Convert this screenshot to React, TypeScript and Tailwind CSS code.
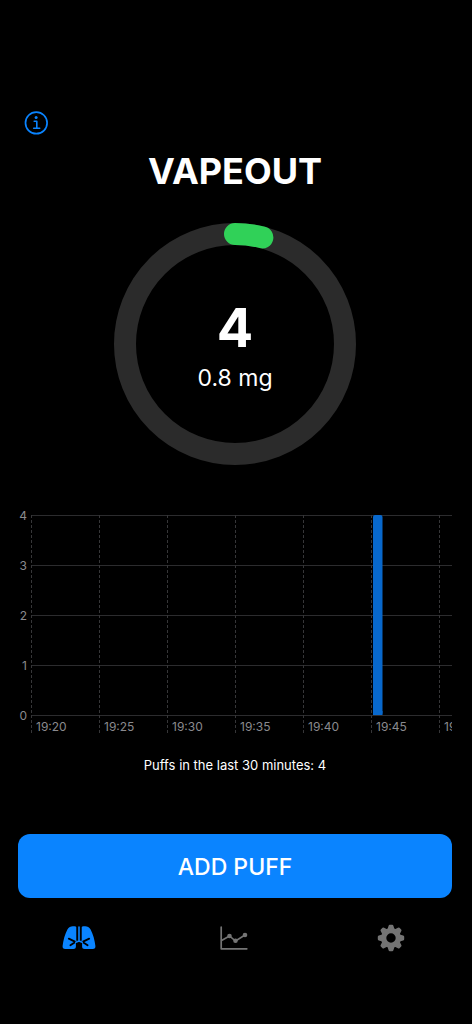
import { useState } from "react";

const GOAL = 100;
const MG_PER_PUFF = 0.2;

const RING_RADIUS = 110;
const RING_LENGTH = 2 * Math.PI * RING_RADIUS;

const PLOT_LEFT = 13;
const PLOT_TOP = 10;
const ROW_HEIGHT = 50;
const COL_WIDTH = 68;

const levels = [4, 3, 2, 1, 0];
const times = ["19:20", "19:25", "19:30", "19:35", "19:40", "19:45", "19:50"];

function InfoIcon() {
  return (
    <svg viewBox="0 0 24 24" className="size-6" fill="none" stroke="currentColor">
      <circle cx="12.3" cy="11.9" r="10.8" strokeWidth="1.7" />
      <circle cx="12.1" cy="6.5" r="1.5" fill="currentColor" stroke="none" />
      <path d="M10.2 10.2h2.6v6.8M9.700 17.200h6" strokeWidth="1.6" strokeLinecap="round" strokeLinejoin="round" />
    </svg>
  );
}

function LungsIcon() {
  return (
    <svg viewBox="0 0 34 24" className="h-6 w-[34px]" fill="none">
      <path
        d="M14.6 1.6v13.2l-.7 1v4.7c0 1.700-.9 2.500-2.500 2.500H3.300C1.300 23 .4 21.900.6 20.100 1.200 14.600 3 8 5.400 3.600 6.800 1.200 8.600.3 10.900.3c2.500 0 3.700.3 3.700 1.300z"
        fill="currentColor"
      />
      <path
        d="M19.400 1.600v13.200l.7 1v4.700c0 1.700.9 2.500 2.500 2.500h8.100c2 0 2.900-1.100 2.700-2.900C32.800 14.600 31 8 28.600 3.600 27.200 1.200 25.400.3 23.100.3c-2.500 0-3.700.3-3.700 1.300z"
        fill="currentColor"
      />
      <path
        d="M6.800 12.600 13.400 15.900 8.400 19.200M27.200 12.600 20.600 15.900 25.600 19.200"
        stroke="#000"
        strokeWidth="1.800"
        strokeLinecap="round"
        strokeLinejoin="round"
      />
      <path d="M15.200 0v14.200M18.800 0v14.200" stroke="#000" strokeWidth="1.500" />
      <path
        d="M17 1v13.800M13.800 16.200 17 14.900l3.200 1.300"
        stroke="currentColor"
        strokeWidth="1.600"
        strokeLinecap="round"
        strokeLinejoin="round"
      />
    </svg>
  );
}

function StatsIcon() {
  return (
    <svg viewBox="0 0 28 24" className="h-6 w-7" fill="none" stroke="currentColor" strokeLinecap="round">
      <path d="M1.200 1.200v21.600h25.600" strokeWidth="1.700" strokeLinejoin="round" />
      <path d="M2 14.300 9.500 10l6 5 9.500-6" strokeWidth="1.600" />
      <g fill="currentColor" stroke="none">
        <circle cx="9.500" cy="10" r="2.300" />
        <circle cx="15.500" cy="14.800" r="2.300" />
        <circle cx="25" cy="9" r="2.300" />
      </g>
    </svg>
  );
}

function GearIcon() {
  return (
    <svg viewBox="-14 -14 28 28" className="size-7" fill="currentColor">
      <path
        fillRule="evenodd"
        d="M0-10a10 10 0 1 0 0 20a10 10 0 1 0 0-20zM0-4.700a4.700 4.700 0 1 1 0 9.400a4.700 4.700 0 1 1 0-9.400z"
      />
      {[0, 45, 90, 135, 180, 225, 270, 315].map((angle) => (
        <path
          key={angle}
          transform={`rotate(${angle})`}
          d="M-3.600-8.500-2.400-12.200Q-2.100-13.200-1.200-13.200H1.200Q2.100-13.200 2.400-12.200L3.600-8.500z"
        />
      ))}
    </svg>
  );
}

function PuffRing({ puffs }: { puffs: number }) {
  return (
    <div className="grid place-items-center">
      <svg viewBox="0 0 242 242" className="col-start-1 row-start-1 size-[242px]" fill="none" strokeWidth="22">
        <circle cx="121" cy="121" r={RING_RADIUS} stroke="#2b2b2b" />
        <circle
          cx="121"
          cy="121"
          r={RING_RADIUS}
          stroke="#30d158"
          strokeLinecap="round"
          strokeDasharray={`${(puffs / GOAL) * RING_LENGTH} ${RING_LENGTH}`}
          transform="rotate(-90 121 121)"
        />
      </svg>
      <div className="col-start-1 row-start-1 pt-2 text-center">
        <div className="text-[54px] leading-[60px] font-bold">{puffs}</div>
        <div className="text-[23px] leading-10">{(puffs * MG_PER_PUFF).toFixed(1)} mg</div>
      </div>
    </div>
  );
}

function PuffChart({ puffs }: { puffs: number }) {
  const bottom = PLOT_TOP + ROW_HEIGHT * 4;
  const barHeight = Math.min(puffs, 4) * ROW_HEIGHT;

  return (
    <svg className="h-[230px] w-full text-xs" role="img" aria-label="Puffs over time">
      {levels.map((level, i) => {
        const y = PLOT_TOP + i * ROW_HEIGHT;
        return (
          <g key={level}>
            <line x1={PLOT_LEFT} x2="100%" y1={y + 0.5} y2={y + 0.5} stroke="#2c2c2e" />
            <text x="9" y={y + 5} textAnchor="end" fill="#8a8a8e">
              {level}
            </text>
          </g>
        );
      })}
      {times.map((time, i) => {
        const x = PLOT_LEFT + i * COL_WIDTH;
        return (
          <g key={time}>
            <line x1={x + 0.5} x2={x + 0.5} y1={PLOT_TOP} y2={bottom + 18} stroke="#363638" strokeDasharray="3 2" />
            <text x={x + 5} y={bottom + 16} fill="#8a8a8e">
              {time}
            </text>
          </g>
        );
      })}
      <rect x="355" y={bottom - barHeight} width="9.5" height={barHeight} rx="2" fill="#0868cc" />
      <rect x="355" y={bottom - 4} width="9.5" height="4" fill="#0868cc" />
    </svg>
  );
}

export default function App() {
  const [puffs, setPuffs] = useState(4);

  return (
    <div className="flex min-h-screen flex-col bg-black pt-[111px] font-['Inter',sans-serif] text-white">
      <header className="px-6">
        <button aria-label="Info" className="block text-[#0a84ff]">
          <InfoIcon />
        </button>
      </header>

      <main className="flex flex-col pr-5 pl-[18px]">
        <h1 className="mt-3 text-center text-[36px] leading-[48px] font-bold">VAPEOUT</h1>

        <div className="mt-7">
          <PuffRing puffs={puffs} />
        </div>

        <div className="mt-10">
          <PuffChart puffs={puffs} />
        </div>

        <p className="mt-5 text-center text-[13px] leading-5">Puffs in the last 30 minutes: {puffs}</p>

        <button
          onClick={() => setPuffs(puffs + 1)}
          className="mt-[59px] h-16 rounded-xl bg-[#0a84ff] pt-0.5 text-[23px] font-medium"
        >
          ADD PUFF
        </button>
      </main>

      {/* Tab bar */}
      <nav className="mt-6 grid grid-cols-3 text-[#747474]">
        <button aria-label="Puffs" className="flex h-8 items-center justify-center text-[#0a84ff]">
          <LungsIcon />
        </button>
        <button aria-label="Statistics" className="flex h-8 items-center justify-center pr-1">
          <StatsIcon />
        </button>
        <button aria-label="Settings" className="flex h-8 items-center justify-center pr-1">
          <GearIcon />
        </button>
      </nav>
    </div>
  );
}
